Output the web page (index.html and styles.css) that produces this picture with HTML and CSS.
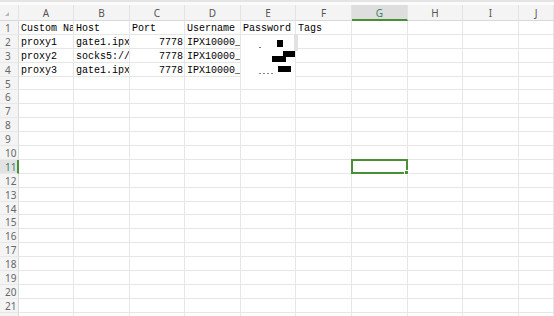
FILE: index.html
```html
<!DOCTYPE html>
<html>
<head>
<meta charset="utf-8">
<link rel="stylesheet" href="styles.css">
</head>
<body>
<div class="app">
  <div class="chrome"></div>
  <div class="sheet">
    <div class="ch corner"><span class="tri"></span></div>
    <div class="ch">A</div><div class="ch">B</div><div class="ch">C</div><div class="ch">D</div><div class="ch">E</div><div class="ch">F</div><div class="ch on">G</div><div class="ch">H</div><div class="ch">I</div><div class="ch">J</div>

    <div class="rh">1</div><div class="c">Custom Name</div><div class="c">Host</div><div class="c">Port</div><div class="c">Username</div><div class="c">Password</div><div class="c">Tags</div><div class="c"></div><div class="c"></div><div class="c"></div><div class="c"></div>
    <div class="rh">2</div><div class="c">proxy1</div><div class="c">gate1.ipxo.net</div><div class="c num">7778</div><div class="c">IPX10000_a</div><div class="c"></div><div class="c"></div><div class="c"></div><div class="c"></div><div class="c"></div><div class="c"></div>
    <div class="rh">3</div><div class="c">proxy2</div><div class="c">socks5://gate1</div><div class="c num">7778</div><div class="c">IPX10000_b</div><div class="c"></div><div class="c"></div><div class="c"></div><div class="c"></div><div class="c"></div><div class="c"></div>
    <div class="rh">4</div><div class="c">proxy3</div><div class="c">gate1.ipxo.net</div><div class="c num">7778</div><div class="c">IPX10000_c</div><div class="c"></div><div class="c"></div><div class="c"></div><div class="c"></div><div class="c"></div><div class="c"></div>
    <div class="rh">5</div><div class="c"></div><div class="c"></div><div class="c"></div><div class="c"></div><div class="c"></div><div class="c"></div><div class="c"></div><div class="c"></div><div class="c"></div><div class="c"></div>
    <div class="rh">6</div><div class="c"></div><div class="c"></div><div class="c"></div><div class="c"></div><div class="c"></div><div class="c"></div><div class="c"></div><div class="c"></div><div class="c"></div><div class="c"></div>
    <div class="rh">7</div><div class="c"></div><div class="c"></div><div class="c"></div><div class="c"></div><div class="c"></div><div class="c"></div><div class="c"></div><div class="c"></div><div class="c"></div><div class="c"></div>
    <div class="rh">8</div><div class="c"></div><div class="c"></div><div class="c"></div><div class="c"></div><div class="c"></div><div class="c"></div><div class="c"></div><div class="c"></div><div class="c"></div><div class="c"></div>
    <div class="rh">9</div><div class="c"></div><div class="c"></div><div class="c"></div><div class="c"></div><div class="c"></div><div class="c"></div><div class="c"></div><div class="c"></div><div class="c"></div><div class="c"></div>
    <div class="rh">10</div><div class="c"></div><div class="c"></div><div class="c"></div><div class="c"></div><div class="c"></div><div class="c"></div><div class="c"></div><div class="c"></div><div class="c"></div><div class="c"></div>
    <div class="rh on">11</div><div class="c"></div><div class="c"></div><div class="c"></div><div class="c"></div><div class="c"></div><div class="c"></div><div class="c sel"></div><div class="c"></div><div class="c"></div><div class="c"></div>
    <div class="rh">12</div><div class="c"></div><div class="c"></div><div class="c"></div><div class="c"></div><div class="c"></div><div class="c"></div><div class="c"></div><div class="c"></div><div class="c"></div><div class="c"></div>
    <div class="rh">13</div><div class="c"></div><div class="c"></div><div class="c"></div><div class="c"></div><div class="c"></div><div class="c"></div><div class="c"></div><div class="c"></div><div class="c"></div><div class="c"></div>
    <div class="rh">14</div><div class="c"></div><div class="c"></div><div class="c"></div><div class="c"></div><div class="c"></div><div class="c"></div><div class="c"></div><div class="c"></div><div class="c"></div><div class="c"></div>
    <div class="rh">15</div><div class="c"></div><div class="c"></div><div class="c"></div><div class="c"></div><div class="c"></div><div class="c"></div><div class="c"></div><div class="c"></div><div class="c"></div><div class="c"></div>
    <div class="rh">16</div><div class="c"></div><div class="c"></div><div class="c"></div><div class="c"></div><div class="c"></div><div class="c"></div><div class="c"></div><div class="c"></div><div class="c"></div><div class="c"></div>
    <div class="rh">17</div><div class="c"></div><div class="c"></div><div class="c"></div><div class="c"></div><div class="c"></div><div class="c"></div><div class="c"></div><div class="c"></div><div class="c"></div><div class="c"></div>
    <div class="rh">18</div><div class="c"></div><div class="c"></div><div class="c"></div><div class="c"></div><div class="c"></div><div class="c"></div><div class="c"></div><div class="c"></div><div class="c"></div><div class="c"></div>
    <div class="rh">19</div><div class="c"></div><div class="c"></div><div class="c"></div><div class="c"></div><div class="c"></div><div class="c"></div><div class="c"></div><div class="c"></div><div class="c"></div><div class="c"></div>
    <div class="rh">20</div><div class="c"></div><div class="c"></div><div class="c"></div><div class="c"></div><div class="c"></div><div class="c"></div><div class="c"></div><div class="c"></div><div class="c"></div><div class="c"></div>
    <div class="rh">21</div><div class="c"></div><div class="c"></div><div class="c"></div><div class="c"></div><div class="c"></div><div class="c"></div><div class="c"></div><div class="c"></div><div class="c"></div><div class="c"></div>
    <div class="rh">22</div><div class="c"></div><div class="c"></div><div class="c"></div><div class="c"></div><div class="c"></div><div class="c"></div><div class="c"></div><div class="c"></div><div class="c"></div><div class="c"></div>

    <div class="redact">
      <span class="gstrip"></span>
      <span class="dot d1"></span>
      <span class="blk b1"></span>
      <span class="blk b2"></span>
      <span class="blk b3"></span>
      <span class="blk b4"></span>
      <span class="specks"></span>
    </div>
  </div>
</div>
</body>
</html>
```
FILE: styles.css
```css
html, body {
  margin: 0;
  padding: 0;
  background: #fff;
}
.app {
  width: 554px;
  height: 316px;
  overflow: hidden;
}
.chrome {
  height: 3px;
  border-top: 2px solid #e4e4e4;
  background: #fbfbfb;
}
.sheet {
  position: relative;
  display: grid;
  grid-template-columns: 19px 55px 56px 55px 56px 55px 56px 56px 55px 56px 35px;
  grid-template-rows: 16px;
  grid-auto-rows: 13.9px;
}
.ch {
  box-sizing: border-box;
  background: #f4f4f4;
  border-bottom: 1px solid #d9d9d9;
  border-right: 1px solid #e3e3e3;
  font-family: "Noto Sans", "Liberation Sans", sans-serif;
  font-size: 10px;
  color: #555;
  text-align: center;
  line-height: 17px;
  overflow: hidden;
}
.ch.on {
  background: #dedede;
  color: #3d7f63;
  border-bottom: 2px solid #4a8f35;
}
.corner {
  position: relative;
}
.tri {
  position: absolute;
  left: 5px;
  top: 7px;
  width: 0;
  height: 0;
  border-left: 4px solid transparent;
  border-bottom: 4px solid #b8b8b8;
}
.rh {
  box-sizing: border-box;
  background: #f4f4f4;
  border-right: 1px solid #d9d9d9;
  border-bottom: 1px solid #e8e8e8;
  font-family: "Noto Sans", "Liberation Sans", sans-serif;
  font-size: 10px;
  color: #666;
  padding-left: 5px;
  line-height: 15px;
  overflow: hidden;
}
.rh.on {
  background: #e2e2e2;
  color: #3d7f63;
  border-right: 2px solid #4a8f35;
}
.c {
  box-sizing: border-box;
  border-right: 1px solid #e6e6e6;
  border-bottom: 1px solid #e6e6e6;
  font-family: "Liberation Mono", monospace;
  font-size: 10px;
  color: #000;
  line-height: 16px;
  padding: 0 1px 0 2px;
  white-space: nowrap;
  overflow: hidden;
}
.c.num {
  text-align: right;
  padding-right: 1px;
}
.sel {
  position: relative;
  overflow: visible;
}
.sel::before {
  content: "";
  position: absolute;
  left: -1px;
  top: -1px;
  right: -1px;
  bottom: -1px;
  border: 2px solid #4a8f35;
}
.sel::after {
  content: "";
  position: absolute;
  right: -2px;
  bottom: -2px;
  width: 3px;
  height: 3px;
  background: #4a8f35;
  border: 1px solid #fff;
}
.redact {
  position: absolute;
  left: 241px;
  top: 30px;
  width: 54px;
  height: 43px;
  background: #fff;
}
.gstrip {
  position: absolute;
  left: 53px;
  top: -1px;
  width: 4px;
  height: 17px;
  background: #e2e2e2;
}
.blk {
  position: absolute;
  background: #000;
}
.b1 { left: 36px; top: 5px; width: 6px; height: 7px; }
.b2 { left: 42px; top: 16px; width: 12px; height: 6px; }
.b3 { left: 31px; top: 21px; width: 14px; height: 6px; }
.b4 { left: 37px; top: 31px; width: 13px; height: 6px; }
.dot {
  position: absolute;
  background: #777;
}
.d1 { left: 18px; top: 12px; width: 2px; height: 1px; }
.specks {
  position: absolute;
  left: 18px;
  top: 38px;
  width: 16px;
  height: 1px;
  background: repeating-linear-gradient(90deg, #888 0 2px, transparent 2px 4px);
}
```
